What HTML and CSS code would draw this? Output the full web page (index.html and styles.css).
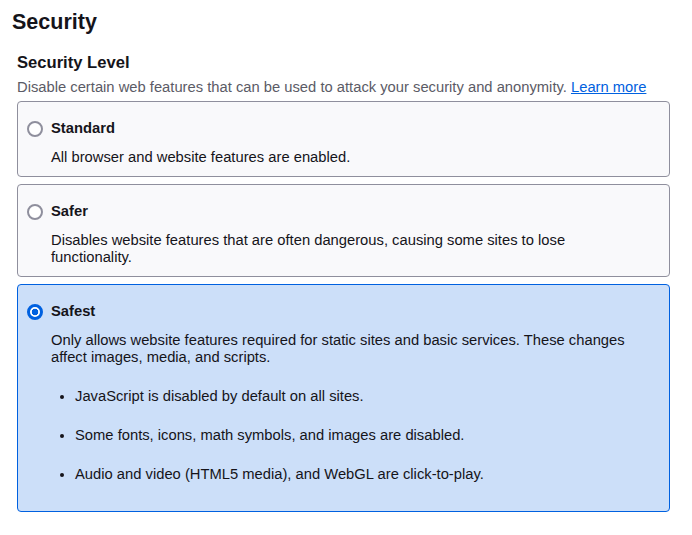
FILE: index.html
```html
<!DOCTYPE html>
<html>
<head>
<meta charset="utf-8">
<link rel="stylesheet" href="styles.css">
</head>
<body>
<h1 class="page-title">Security</h1>
<section class="group">
  <h2 class="group-title">Security Level</h2>
  <p class="group-desc">Disable certain web features that can be used to attack your security and anonymity. <a class="link" href="#">Learn more</a></p>
  <div class="option">
    <div class="option-head"><span class="radio"></span><span class="option-title">Standard</span></div>
    <p class="option-desc">All browser and website features are enabled.</p>
  </div>
  <div class="option">
    <div class="option-head"><span class="radio"></span><span class="option-title">Safer</span></div>
    <p class="option-desc">Disables website features that are often dangerous, causing some sites to lose functionality.</p>
  </div>
  <div class="option selected">
    <div class="option-head"><span class="radio checked"></span><span class="option-title">Safest</span></div>
    <p class="option-desc">Only allows website features required for static sites and basic services. These changes affect images, media, and scripts.</p>
    <ul class="option-list">
      <li>JavaScript is disabled by default on all sites.</li>
      <li>Some fonts, icons, math symbols, and images are disabled.</li>
      <li>Audio and video (HTML5 media), and WebGL are click-to-play.</li>
    </ul>
  </div>
</section>
</body>
</html>
```

FILE: styles.css
```css
html, body {
  margin: 0;
  padding: 0;
  background: #ffffff;
}
body {
  font-family: "Liberation Sans", Arial, sans-serif;
  color: #15141a;
  font-size: 14.75px;
  line-height: 17px;
}
.page-title {
  margin: 8px 0 0 12px;
  font-size: 21.5px;
  line-height: 28px;
  font-weight: 700;
}
.group {
  margin: 17px 22px 0 17px;
}
.group-title {
  margin: 0;
  font-size: 16.6px;
  line-height: 20px;
  font-weight: 700;
}
.group-desc {
  margin: 6px 0 0 0;
  color: #5b5b66;
}
.link {
  color: #0061e0;
  text-decoration: underline;
}
.option {
  margin-top: 5px;
  border: 1px solid #8f8f9d;
  border-radius: 4px;
  background: #f9f9fb;
  padding: 18px 35px 10px 9px;
}
.option + .option {
  margin-top: 7px;
}
.option.selected {
  margin-top: 7px;
  border-color: #0061e0;
  background: #ccdff9;
}
.option-head {
  display: flex;
  align-items: center;
  gap: 8px;
}
.radio {
  box-sizing: border-box;
  width: 16px;
  height: 16px;
  border: 2px solid #8f8f9d;
  border-radius: 50%;
  background: #ffffff;
  flex: none;
  margin-top: 1px;
}
.radio.checked {
  border: 3px solid #0061e0;
  background: radial-gradient(circle, #0061e0 0 3px, #ffffff 3.6px);
}
.option-title {
  font-weight: 700;
}
.option-desc {
  margin: 12px 0 0 24px;
}
.option-list {
  margin: 0 0 18px 24px;
  padding: 0 0 0 24px;
}
.option-list li {
  margin-top: 22px;
}
```
